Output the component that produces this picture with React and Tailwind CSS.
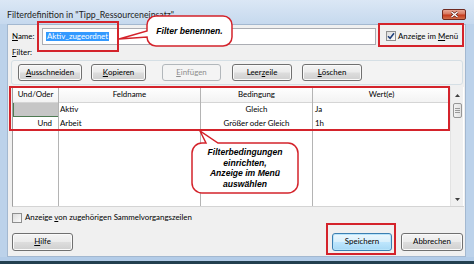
import React from "react";

const btnBase =
  "h-[17px] flex items-center justify-center rounded-[3px] border text-[7.9px] leading-none";
const btnNormal =
  "border-[#707070] bg-[linear-gradient(#f4f4f4,#ebebeb_48%,#dddddd_52%,#cfcfcf)] text-black shadow-[inset_0_0_0_1px_#fafafa]";
const btnDisabled = "border-[#b2b7bb] bg-[#f4f4f4] text-[#8d8d8d]";
const btnDefault =
  "border-[#3c7fb1] bg-[linear-gradient(#ecf7fd,#d9f0fc_48%,#bee6fd_52%,#a7d9f5)] text-black shadow-[inset_0_0_0_1px_#b8e4fb]";

function U({ children }) {
  return <span className="underline underline-offset-[1px]">{children}</span>;
}

function Check({ checked }) {
  return (
    <div className="w-[10px] h-[10px] border border-[#8e8f8f] bg-[linear-gradient(135deg,#dcdcdc,#fbfbfb)] flex items-center justify-center shrink-0">
      {checked && (
        <svg width="8" height="8" viewBox="0 0 8 8">
          <path d="M1 4.2 L3.1 6.3 L7 1.2" fill="none" stroke="#1f3f7a" strokeWidth="1.5" />
        </svg>
      )}
    </div>
  );
}

export default function App() {
  return (
    <div className="w-[474px] h-[264px] overflow-hidden relative flex flex-col bg-[#bcd2ea] font-[Lato,'Noto_Sans',sans-serif] text-black">
      {/* title bar */}
      <div className="h-[24px] flex items-start bg-[linear-gradient(#dbe7f5,#c6d9ee)] shrink-0">
        <div className="pl-[7px] pt-[9px] text-[8.8px] leading-[11px] text-[#1e1e1e] whitespace-nowrap">
          Filterdefinition in "Tipp_Ressourceneinsatz"
        </div>
        <div className="ml-auto mr-[8px] mt-[9px] w-[24px] h-[11px] rounded-[2px] border border-[#6e2a20] bg-[linear-gradient(#e9a896,#d8785f_45%,#c5391c_55%,#d2704c)] flex items-center justify-center">
          <svg width="9" height="7" viewBox="0 0 9 7">
            <path d="M1.5 1 L7.5 6 M7.5 1 L1.5 6" stroke="#5a1a12" strokeWidth="2.6" />
            <path d="M1.5 1 L7.5 6 M7.5 1 L1.5 6" stroke="#ffffff" strokeWidth="1.5" />
          </svg>
        </div>
      </div>

      {/* dialog body */}
      <div className="mx-[7px] w-[459px] h-[233px] shrink-0 bg-[#f0f0f0] border border-[#a3b8d0] flex flex-col text-[7.9px]">
        {/* name row */}
        <div className="mt-[3px] h-[17px] flex items-center">
          <div className="pl-[4px] w-[34px]">
            <U>N</U>ame:
          </div>
          <div className="w-[334px] h-[17px] bg-white border border-[#abadb3] flex items-center pl-[3px]">
            <span className="bg-[#3399ff] text-white px-[1px] leading-[9px]">Aktiv_zugeordnet</span>
          </div>
          <div className="ml-[10px] flex items-center gap-[2px]">
            <Check checked />
            <span className="whitespace-nowrap">
              Anzeige im <U>M</U>enü
            </span>
          </div>
        </div>

        {/* filter label */}
        <div className="mt-[2px] h-[12px] flex items-center pl-[4px]">
          <U>F</U>ilter:
        </div>

        {/* toolbar group */}
        <div className="mt-[1px] ml-[3px] w-[452px] h-[25px] border border-[#d5dfe5] rounded-[3px] bg-[#f3f3f3] flex items-start pt-[3px] pl-[6px]">
          <div className={`${btnBase} ${btnNormal} w-[64px]`}>
            <U>A</U>usschneiden
          </div>
          <div className={`${btnBase} ${btnNormal} w-[55px] ml-[9px]`}>
            <U>K</U>opieren
          </div>
          <div className={`${btnBase} ${btnDisabled} w-[59px] ml-[16px]`}>
            <U>E</U>infügen
          </div>
          <div className={`${btnBase} ${btnNormal} w-[60px] ml-[11px]`}>
            Leer<U>z</U>eile
          </div>
          <div className={`${btnBase} ${btnNormal} w-[60px] ml-[10px]`}>
            <U>L</U>öschen
          </div>
        </div>

        {/* table */}
        <div className="mt-[2px] ml-[4px] w-[452px] h-[120px] flex border-l border-[#a0a0a0] border-b border-b-[#d4d4d4] bg-white">
          {/* col 1 */}
          <div className="w-[46px] flex flex-col border-r border-[#b4b4b4]">
            <div className="h-[16px] flex items-center justify-center border-b border-[#d5d5d5] bg-[linear-gradient(#ffffff,#f3f3f3)]">
              Und/Oder
            </div>
            <div className="h-[14px] bg-[#c6c6c6] border-l border-b border-[#4e7a52]"></div>
            <div className="h-[14px] flex items-center justify-end pr-[6px]">Und</div>
          </div>
          {/* col 2 */}
          <div className="w-[142px] flex flex-col border-r border-[#b4b4b4]">
            <div className="h-[16px] flex items-center justify-center border-b border-[#d5d5d5] bg-[linear-gradient(#ffffff,#f3f3f3)]">
              Feldname
            </div>
            <div className="h-[14px] flex items-center pl-[1px]">Aktiv</div>
            <div className="h-[14px] flex items-center pl-[1px]">Arbeit</div>
          </div>
          {/* col 3 */}
          <div className="w-[112px] flex flex-col border-r border-[#b4b4b4]">
            <div className="h-[16px] flex items-center justify-center border-b border-[#d5d5d5] bg-[linear-gradient(#ffffff,#f3f3f3)]">
              Bedingung
            </div>
            <div className="h-[14px] flex items-center justify-center">Gleich</div>
            <div className="h-[14px] flex items-center justify-center">Größer oder Gleich</div>
          </div>
          {/* col 4 */}
          <div className="w-[137px] flex flex-col">
            <div className="h-[16px] flex items-center justify-center border-b border-[#d5d5d5] bg-[linear-gradient(#ffffff,#f3f3f3)]">
              Wert(e)
            </div>
            <div className="h-[14px] flex items-center pl-[2px]">Ja</div>
            <div className="h-[14px] flex items-center pl-[2px]">1h</div>
          </div>
          {/* scrollbar */}
          <div className="w-[13px] bg-[#f0f0f0] border-l border-[#e3e3e3] flex flex-col items-center">
            <div className="h-[16px] flex items-center justify-center">
              <svg width="5" height="3" viewBox="0 0 5 3">
                <path d="M0 3 L2.5 0 L5 3 Z" fill="#404040" />
              </svg>
            </div>
            <div className="w-[9px] h-[15px] rounded-[2px] border border-[#979797] bg-[linear-gradient(90deg,#f3f3f3,#e2e2e2)] flex flex-col items-center justify-center gap-[1px]">
              <div className="w-[5px] h-px bg-[#9a9a9a]"></div>
              <div className="w-[5px] h-px bg-[#9a9a9a]"></div>
              <div className="w-[5px] h-px bg-[#9a9a9a]"></div>
            </div>
            <div className="mt-auto h-[14px] flex items-center justify-center">
              <svg width="5" height="3" viewBox="0 0 5 3">
                <path d="M0 0 L2.5 3 L5 0 Z" fill="#404040" />
              </svg>
            </div>
          </div>
        </div>

        {/* summary checkbox */}
        <div className="mt-[6px] ml-[4px] h-[10px] flex items-center gap-[3px]">
          <Check />
          <span className="whitespace-nowrap">
            Anzeige <U>v</U>on zugehörigen Sammelvorgangszeilen
          </span>
        </div>

        {/* bottom buttons */}
        <div className="mt-[10px] h-[18px] flex">
          <div className={`${btnBase} ${btnNormal} h-[18px] w-[61px] ml-[4px]`}>
            <U>H</U>ilfe
          </div>
          <div className={`${btnBase} ${btnDefault} h-[18px] w-[60px] ml-auto`}>Speichern</div>
          <div className={`${btnBase} ${btnNormal} h-[18px] w-[62px] ml-[9px] mr-[2px]`}>Abbrechen</div>
        </div>
      </div>

      {/* bottom frame */}
      <div className="h-[4px] bg-[#b3cce8] shrink-0"></div>
      <div className="h-[3px] bg-[#23404f] shrink-0"></div>

      {/* annotations */}
      <div className="absolute left-[37px] top-[21px] w-[82px] h-[31px] border-2 border-[#d4232b]"></div>
      <div className="absolute left-[378px] top-[23px] w-[86px] h-[24px] border-2 border-[#d4232b]"></div>
      <div className="absolute left-[9px] top-[86px] w-[441px] h-[45px] border-2 border-[#d4232b]"></div>
      <div className="absolute left-[326px] top-[223px] w-[70px] h-[32px] border-2 border-[#d4232b]"></div>

      <svg className="absolute left-0 top-0" width="474" height="264" viewBox="0 0 474 264">
        <path
          d="M156 16 H223 A9 9 0 0 1 232 25 V37 A9 9 0 0 1 223 46 H156 A9 9 0 0 1 147 37 L119 39 L147 31 V25 A9 9 0 0 1 156 16 Z"
          fill="#ffffff"
          stroke="#d4232b"
          strokeWidth="1.5"
        />
        <path
          d="M202 143 L206 143 L200 131 L218 143 H288 A10 10 0 0 1 298 153 V183 A10 10 0 0 1 288 193 H202 A10 10 0 0 1 192 183 V153 A10 10 0 0 1 202 143 Z"
          fill="#ffffff"
          stroke="#d4232b"
          strokeWidth="1.5"
        />
      </svg>

      <div className="absolute left-[147px] top-[16px] w-[85px] h-[30px] flex items-center justify-center font-['Liberation_Sans',Arial,sans-serif] font-bold italic text-[8.6px] leading-none">
        Filter benennen.
      </div>
      <div className="absolute left-[192px] top-[143px] w-[106px] h-[50px] flex flex-col items-center justify-center font-['Liberation_Sans',Arial,sans-serif] font-bold italic text-[8.6px] leading-[10.5px] text-center">
        <div>Filterbedingungen</div>
        <div>einrichten,</div>
        <div>Anzeige im Menü</div>
        <div>auswählen</div>
      </div>
    </div>
  );
}
